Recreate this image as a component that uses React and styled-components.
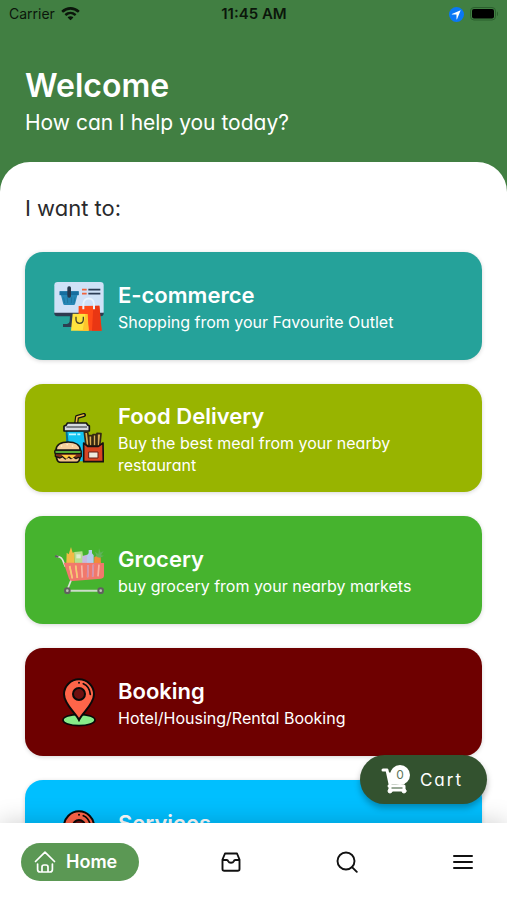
import React from 'react';
import styled, { createGlobalStyle } from 'styled-components';

const GlobalStyle = createGlobalStyle`
  *, *::before, *::after { box-sizing: border-box; }
  body {
    margin: 0;
    background: #fff;
    font-family: Inter, "Liberation Sans", sans-serif;
  }
  button { font: inherit; color: inherit; border: 0; cursor: pointer; }
  h1, h2, p { margin: 0; }
  svg { display: block; flex: none; }
`;

const Screen = styled.div`
  position: relative;
  display: flex;
  flex-direction: column;
  height: 100vh;
  overflow: hidden;
  background: #417f42;
`;

const StatusBar = styled.div`
  display: grid;
  grid-template-columns: 1fr auto 1fr;
  align-items: center;
  height: 28px;
  padding: 0 8px 0 9px;
  color: #0b160b;
  font-size: 14px;
  line-height: 20px;
`;

const StatusGroup = styled.div`
  display: flex;
  align-items: center;
  justify-content: ${({ $end }) => ($end ? 'flex-end' : 'flex-start')};
  gap: 6px;
`;

const Clock = styled.time`
  font-size: 15px;
  font-weight: 600;
`;

const Scroller = styled.div`
  flex: 1;
  min-height: 0;
  overflow-y: auto;
  scrollbar-width: none;
  font-feature-settings: 'cv11';
`;

const Header = styled.header`
  height: 134px;
  padding: 37px 25px 0;
  color: #fff;
`;

const Heading = styled.h1`
  font-size: 32px;
  font-weight: 600;
  line-height: 42px;
`;

const Greeting = styled.p`
  font-size: 21px;
  line-height: 32px;
`;

const Panel = styled.main`
  padding: 30px 25px 24px;
  border-radius: 30px 30px 0 0;
  background: #fff;
`;

const Prompt = styled.h2`
  margin-bottom: 28px;
  color: #2a2a2c;
  font-size: 22px;
  font-weight: 400;
  line-height: 32px;
`;

const ServiceList = styled.div`
  display: flex;
  flex-direction: column;
  gap: 24px;
`;

const ServiceCard = styled.button`
  display: flex;
  align-items: center;
  gap: 14px;
  width: 100%;
  min-height: 108px;
  padding: 8px 29px;
  border-radius: 18px;
  background: ${({ $color }) => $color};
  box-shadow: 0 1px 4px rgba(0, 0, 0, 0.16);
  text-align: left;
  && { color: #fff; }
`;

const ServiceText = styled.span`
  display: block;
`;

const ServiceTitle = styled.span`
  display: block;
  font-size: 22px;
  font-weight: 600;
  line-height: 32px;
`;

const ServiceDetail = styled.span`
  display: block;
  font-size: 16px;
  line-height: 22px;
`;

const CartButton = styled.button`
  position: absolute;
  right: 20px;
  bottom: 96px;
  display: flex;
  align-items: center;
  gap: 10px;
  height: 49px;
  padding: 0 24px 0 21px;
  border-radius: 25px;
  background: #33522f;
  box-shadow: 0 4px 6px rgba(0, 0, 0, 0.28);
  font-feature-settings: 'cv11';
  && {
    color: #fff;
    font-size: 17px;
    letter-spacing: 2px;
  }
`;

const CartGlyph = styled.span`
  position: relative;
  display: block;
`;

const CartCount = styled.span`
  position: absolute;
  top: 0;
  right: 0;
  width: 20px;
  height: 20px;
  border-radius: 50%;
  background: #fff;
  color: #5d7559;
  font-size: 12px;
  line-height: 20px;
  letter-spacing: 0;
  text-align: center;
`;

const TabBar = styled.nav`
  display: flex;
  align-items: center;
  justify-content: space-between;
  height: 77px;
  padding: 0 33px 0 21px;
  background: #fff;
  box-shadow: 0 0 24px rgba(0, 0, 0, 0.2);
`;

const HomeTab = styled.button`
  display: flex;
  align-items: center;
  gap: 10px;
  height: 38px;
  padding: 0 22px 0 13px;
  border-radius: 19px;
  background: #5b9854;
  font-feature-settings: 'cv11';
  && {
    color: #fff;
    font-size: 18px;
    font-weight: 600;
  }
`;

const TabGroup = styled.div`
  display: flex;
  justify-content: space-between;
  width: 56%;
`;

const IconTab = styled.button`
  padding: 0;
  background: none;
  && { color: #111; }
`;

const Wifi = () => (
  <svg width="19" height="14" viewBox="0 0 19 14" fill="currentColor" aria-hidden="true">
    <path d="M9.5 0C6.1 0 3 1.3.6 3.5c-.2.2-.2.5 0 .7l1.2 1.2c.2.2.5.2.7 0a10.300 10.300 0 0 1 14 0c.2.200.5.200.7 0l1.200-1.200c.2-.2.2-.5 0-.7A13.200 13.200 0 0 0 9.500 0z" />
    <path d="M9.500 4.700c-2.200 0-4.200.8-5.700 2.200-.2.200-.2.500 0 .7L5 8.800c.2.200.5.200.7 0a5.700 5.700 0 0 1 7.600 0c.2.200.5.200.7 0l1.200-1.200c.2-.2.2-.5 0-.7a8.500 8.500 0 0 0-5.700-2.200z" />
    <path d="M9.500 9.200c-1 0-1.900.3-2.600.9-.2.200-.2.500 0 .7l2.200 2.300c.2.200.6.200.8 0l2.200-2.300c.2-.2.2-.5 0-.7-.7-.6-1.600-.9-2.600-.9z" />
  </svg>
);

const Location = () => (
  <svg width="15" height="15" viewBox="0 0 15 15" aria-hidden="true">
    <circle cx="7.500" cy="7.500" r="7.500" fill="#0a78f5" />
    <path d="M11.700 3.300 8 12.200c-.1.300-.5.200-.5-.1V7.600H3c-.3 0-.4-.4-.1-.5z" fill="#fff" />
  </svg>
);

const Battery = () => (
  <svg width="29" height="14" viewBox="0 0 29 14" aria-hidden="true">
    <rect x=".5" y=".5" width="25" height="12.500" rx="3.500" fill="none" stroke="#2b602d" />
    <rect x="2" y="2" width="22" height="9.500" rx="2" fill="#000" />
    <path d="M27 4.500c1.300.4 1.300 4.100 0 4.500z" fill="#2b602d" />
  </svg>
);

const EcommerceIcon = () => (
  <svg width="50" height="50" viewBox="30 33 150 150" aria-hidden="true">
    <path d="M78 136h28v35H57v-9h12q7 0 8-8z" fill="#2d3e50" />
    <path d="M31 126h148v4q0 9-9 9H40q-9 0-9-9z" fill="#2e3b50" />
    <path d="M41 36h128q10 0 10 10v82H31V46q0-10 10-10z" fill="#cfe1f7" />
    <path d="M47 64h57v12h-4l-7 27q-1 2-4 2H62q-3 0-4-2l-7-27h-4z" fill="#2586b5" />
    <path d="M47 64h57v11H47z" fill="#176e9f" />
    <path d="m59 82 3 17m8-17 1 17m12-17-1 17m11-17-3 17" stroke="#1f769f" strokeWidth="3" />
    <rect x="70" y="49" width="11" height="34" rx="5" fill="#27384d" />
    <path d="M114 59h14M114 71h14" stroke="#f0633c" strokeWidth="5" />
    <path d="M133 59h36M133 71h36" stroke="#2d3d56" strokeWidth="5" />
    <path d="m104 108 62-1 7 75h-70z" fill="#ff4a18" />
    <path d="m148 108 18-1 7 75h-29z" fill="#e93613" />
    <path d="M118 118v-16c0-22 32-22 32 0v16" fill="none" stroke="#e8f2fc" strokeWidth="6" />
    <path d="m86 131 43 1 5 50H81z" fill="#ffe43e" />
    <path d="m124 132 7 0 3 50h-18z" fill="#ffc52c" />
    <path d="M96 140v8c0 16 22 16 22 0v-8" fill="none" stroke="#49442b" strokeWidth="4" />
  </svg>
);

const FoodIcon = () => (
  <svg width="50" height="50" viewBox="30 33 150 150" strokeLinejoin="round" aria-hidden="true">
    <path d="m96 70 3-25 21-6" fill="none" stroke="#111" strokeWidth="12" strokeLinecap="round" />
    <path d="m96 70 3-25 20-6" fill="none" stroke="#edb83f" strokeWidth="5" strokeLinecap="round" />
    <path d="M65 86h67l-5 92H71z" fill="#13c5f2" />
    <path d="M65 86h5l4 38h-7z" fill="#08708c" />
    <path d="M75 97h34" stroke="#c4f7ff" strokeWidth="5" strokeDasharray="21 4" />
    <path d="m67 69 3-6h57l4 6 5 3v15H60V73z" fill="#d4d9df" stroke="#151515" strokeWidth="5" />
    <path d="M67 75h62" stroke="#4e555b" strokeWidth="4" />
    <path d="m121 91 10-1 5 41h-10zM134 101h10v31h-9zM147 98h9v34h-9zM159 94l12 1-4 39h-8z" fill="#d9ac57" stroke="#352812" strokeWidth="5" />
    <path d="m119 123 12 10h32l14-10 1 56h-59z" fill="#d84422" stroke="#181111" strokeWidth="5" />
    <path d="M134 150h28v18h-28z" fill="#eee9de" stroke="#641f17" strokeWidth="3" />
    <path d="M37 162h72q-2 19-12 19H50q-12 0-13-19z" fill="#f1c489" stroke="#171510" strokeWidth="5" />
    <path d="M34 153h78v10q-5 7-9 3l-7 4-8-5-7 5-7-5-10 6-8-7-8 4-14-5z" fill="#823119" stroke="#171510" strokeWidth="4" />
    <path d="M52 158h45l-13 12-9-8-8 9z" fill="#ffc83d" />
    <rect x="32" y="144" width="80" height="11" rx="5" fill="#57ac38" stroke="#171510" strokeWidth="4" />
    <path d="M36 144c1-18 16-24 37-24s35 9 36 24z" fill="#f5ce9c" stroke="#171510" strokeWidth="5" />
    <path d="M52 132h1m16-4h1m15 4h1" stroke="#fff1cf" strokeWidth="4" strokeLinecap="round" />
  </svg>
);

const GroceryIcon = () => (
  <svg width="50" height="50" viewBox="30 30 150 150" aria-hidden="true">
    <path d="m67 86 1-33 6 5 7-22 5 17 6-2v35z" fill="#f3ba46" />
    <path d="m91 51 24-2 5 37H93z" fill="#b6de8f" />
    <path d="M97 58h13v12H97z" fill="#dceccf" />
    <path d="m115 63 14-4 3 27h-17z" fill="#c7b8df" />
    <path d="M129 86V60l5-5V45h10v10l5 6v25z" fill="#b5cbed" />
    <path d="m150 87 1-20q9-9 19-1l1 21z" fill="#f18a3b" />
    <path d="m158 66-5-16 10 7 2-17 5 13 9-5-8 13 9 1-12 6z" fill="#60b35b" />
    <path d="m37 64 10 2q6 2 9 9l8 20" fill="none" stroke="#e4e5dd" strokeWidth="5" />
    <path d="m36 64 5 1" stroke="#625b66" strokeWidth="6" strokeLinecap="round" />
    <path d="m82 134-12 30" stroke="#dae3d6" strokeWidth="5" />
    <path d="m59 83 121 1v38q0 7-9 9l-84 7q-9 1-12-7z" fill="#f1786c" />
    <path d="m77 93 8 37m10-38 5 37m13-38 2 37m17-38-1 37m17-38-2 36m19-36-3 35" stroke="#f8b5a3" strokeWidth="5" />
    <path d="m77 93 8 37m10-38 5 37" stroke="#f4cf68" strokeWidth="4" />
    <path d="m132 90-1 37m17-38-2 36" stroke="#c98ab2" strokeWidth="4" />
    <path d="M70 167h100" stroke="#cbdcc9" strokeWidth="6" />
    <circle cx="70" cy="167" r="10" fill="#60625e" />
    <circle cx="70" cy="167" r="4" fill="#bdc2b7" />
    <circle cx="170" cy="167" r="10" fill="#60625e" />
    <circle cx="170" cy="167" r="4" fill="#bdc2b7" />
  </svg>
);

const PinIcon = () => (
  <svg width="50" height="50" viewBox="30 36 150 150" aria-hidden="true">
    <ellipse cx="105" cy="165" rx="48" ry="17" fill="#87ec88" stroke="#090909" strokeWidth="5" />
    <path d="M105 165c-10-21-45-47-45-77a45 45 0 0 1 90 0c0 30-35 56-45 77z" fill="#ff6549" stroke="#090909" strokeWidth="6" />
    <circle cx="105" cy="87" r="18" fill="#6e1010" stroke="#090909" strokeWidth="6" />
    <path d="M118 56q19 8 21 32" fill="none" stroke="#090909" strokeWidth="5" strokeLinecap="round" />
    <circle cx="105" cy="53" r="3" fill="#090909" />
  </svg>
);

const CartIcon = () => (
  <svg width="29" height="29" viewBox="0 0 29 29" fill="none" stroke="currentColor" strokeLinecap="round" strokeLinejoin="round" aria-hidden="true">
    <path d="M2 5h4l3 14v7M8 21h15v5M9 25h14" strokeWidth="3" />
    <path d="M7 8h18l-2 11H10z" fill="currentColor" strokeWidth="1" />
    <circle cx="9" cy="26" r="2" fill="currentColor" strokeWidth="1" />
    <circle cx="23" cy="26" r="2" fill="currentColor" strokeWidth="1" />
  </svg>
);

const lineIcon = { fill: 'none', stroke: 'currentColor', strokeLinecap: 'round', strokeLinejoin: 'round', 'aria-hidden': true };

const HomeIcon = () => (
  <svg width="22" height="22" viewBox="0 0 22 22" strokeWidth="1.700" {...lineIcon}>
    <path d="M1.500 10.500 11 1.200l9.500 9.300M3.600 13v5.500q0 2.500 2.500 2.500h9.800q2.500 0 2.500-2.500V13M8 20.500V16q0-2 2-2h2q2 0 2 2v4.500" />
  </svg>
);

const InboxIcon = () => (
  <svg width="22" height="22" viewBox="0 0 22 22" strokeWidth="1.900" {...lineIcon}>
    <path d="M5 2.500h12l2.500 6V18q0 1.800-1.800 1.800H4.300Q2.500 19.800 2.500 18V8.500zM2.500 9h4.300q1 0 1.500 1.300.6 1.400 2.700 1.400t2.700-1.400Q14.200 9 15.200 9h4.300" />
  </svg>
);

const SearchIcon = () => (
  <svg width="22" height="22" viewBox="0 0 22 22" strokeWidth="1.900" {...lineIcon}>
    <circle cx="10" cy="10" r="8.500" />
    <path d="m16.300 16.300 4.500 4.500" />
  </svg>
);

const MenuIcon = () => (
  <svg width="22" height="22" viewBox="0 0 22 22" strokeWidth="2" {...lineIcon}>
    <path d="M2 5h18M2 11h18M2 17h18" />
  </svg>
);

const services = [
  { title: 'E-commerce', detail: 'Shopping from your Favourite Outlet', color: '#25a29a', Icon: EcommerceIcon },
  { title: 'Food Delivery', detail: 'Buy the best meal from your nearby restaurant', color: '#98b400', Icon: FoodIcon },
  { title: 'Grocery', detail: 'buy grocery from your nearby markets', color: '#46b32e', Icon: GroceryIcon },
  { title: 'Booking', detail: 'Hotel/Housing/Rental Booking', color: '#6e0000', Icon: PinIcon },
  { title: 'Services', detail: '\u00a0', color: '#00bfff', Icon: PinIcon },
];

export default function App() {
  return (
    <Screen>
      <GlobalStyle />
      <StatusBar>
        <StatusGroup>Carrier <Wifi /></StatusGroup>
        <Clock>11:45 AM</Clock>
        <StatusGroup $end><Location /><Battery /></StatusGroup>
      </StatusBar>
      <Scroller>
        <Header>
          <Heading>Welcome</Heading>
          <Greeting>How can I help you today?</Greeting>
        </Header>
        <Panel>
          <Prompt>I want to:</Prompt>
          <ServiceList>
            {services.map(({ title, detail, color, Icon }) => (
              <ServiceCard key={title} type="button" $color={color}>
                <Icon />
                <ServiceText>
                  <ServiceTitle>{title}</ServiceTitle>
                  <ServiceDetail>{detail}</ServiceDetail>
                </ServiceText>
              </ServiceCard>
            ))}
          </ServiceList>
        </Panel>
      </Scroller>
      <TabBar>
        <HomeTab type="button" aria-current="page"><HomeIcon />Home</HomeTab>
        <TabGroup>
          <IconTab type="button" aria-label="Orders"><InboxIcon /></IconTab>
          <IconTab type="button" aria-label="Search"><SearchIcon /></IconTab>
          <IconTab type="button" aria-label="Menu"><MenuIcon /></IconTab>
        </TabGroup>
      </TabBar>
      <CartButton type="button">
        <CartGlyph><CartIcon /><CartCount>0</CartCount></CartGlyph>
        Cart
      </CartButton>
    </Screen>
  );
}
